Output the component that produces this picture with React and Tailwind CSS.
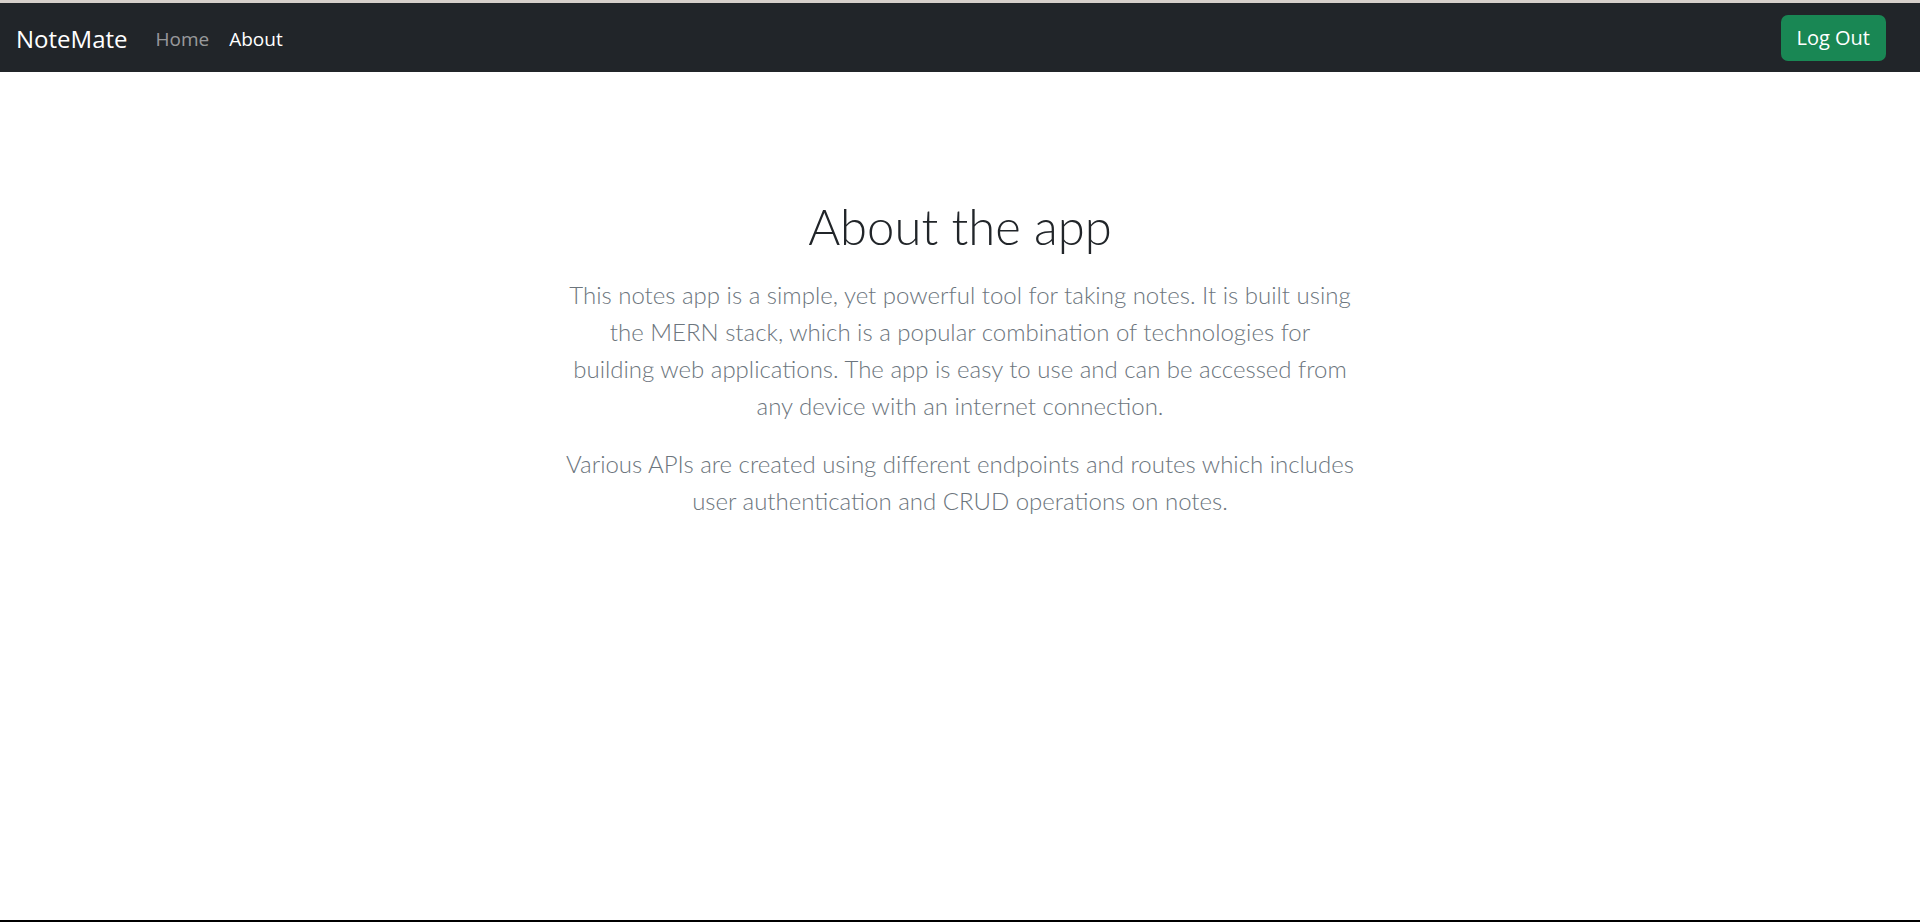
import React from "react";

const NAV_LINKS = [
  { key: "home", label: "Home", active: false },
  { key: "about", label: "About", active: true },
];

// lines kept as they wrap in the original page
const INTRO_LINES = [
  "This notes app is a simple, yet powerful tool for taking notes. It is built using",
  "the MERN stack, which is a popular combination of technologies for",
  "building web applications. The app is easy to use and can be accessed from",
  "any device with an internet connection.",
];

const API_LINES = [
  "Various APIs are created using different endpoints and routes which includes",
  "user authentication and CRUD operations on notes.",
];

function Navbar() {
  return (
    <nav className="flex h-[69px] items-center justify-between bg-[#212529] pl-[16px] pr-[34px] font-['Open_Sans',sans-serif]">
      <div className="flex items-center pt-[3px]">
        <a href="#" className="mr-[18px] text-[24px] leading-none text-white">
          NoteMate
        </a>
        <ul className="flex items-center">
          {NAV_LINKS.map((link) => (
            <li key={link.key}>
              <a
                href="#"
                className={`px-[10px] text-[19px] ${
                  link.active ? "text-white" : "text-[rgba(255,255,255,0.55)]"
                }`}
              >
                {link.label}
              </a>
            </li>
          ))}
        </ul>
      </div>
      <button className="mt-[1px] h-[46px] rounded-[7px] bg-[#198754] px-[16px] text-[20px] text-white">
        Log Out
      </button>
    </nav>
  );
}

function App() {
  return (
    <div className="flex min-h-[922px] flex-col bg-white">
      <div className="h-[3px] bg-[#d6d0cb]" />
      <Navbar />
      <main className="flex-1 font-['Lato',sans-serif]">
        <div className="mx-auto mt-[125px] w-[840px] text-center">
          <h1 className="mb-[20px] text-[49px] font-light leading-[1.2] text-[#212529]">
            About the app
          </h1>
          <p className="mb-[21px] text-[24px] font-light leading-[37px] text-[#6c757d]">
            {INTRO_LINES.map((line, i) => (
              <span key={i} className="block">
                {line}
              </span>
            ))}
          </p>
          <p className="text-[24px] font-light leading-[37px] text-[#6c757d]">
            {API_LINES.map((line, i) => (
              <span key={i} className="block">
                {line}
              </span>
            ))}
          </p>
        </div>
      </main>
      <div className="h-[2px] bg-black" />
    </div>
  );
}

export default App;
